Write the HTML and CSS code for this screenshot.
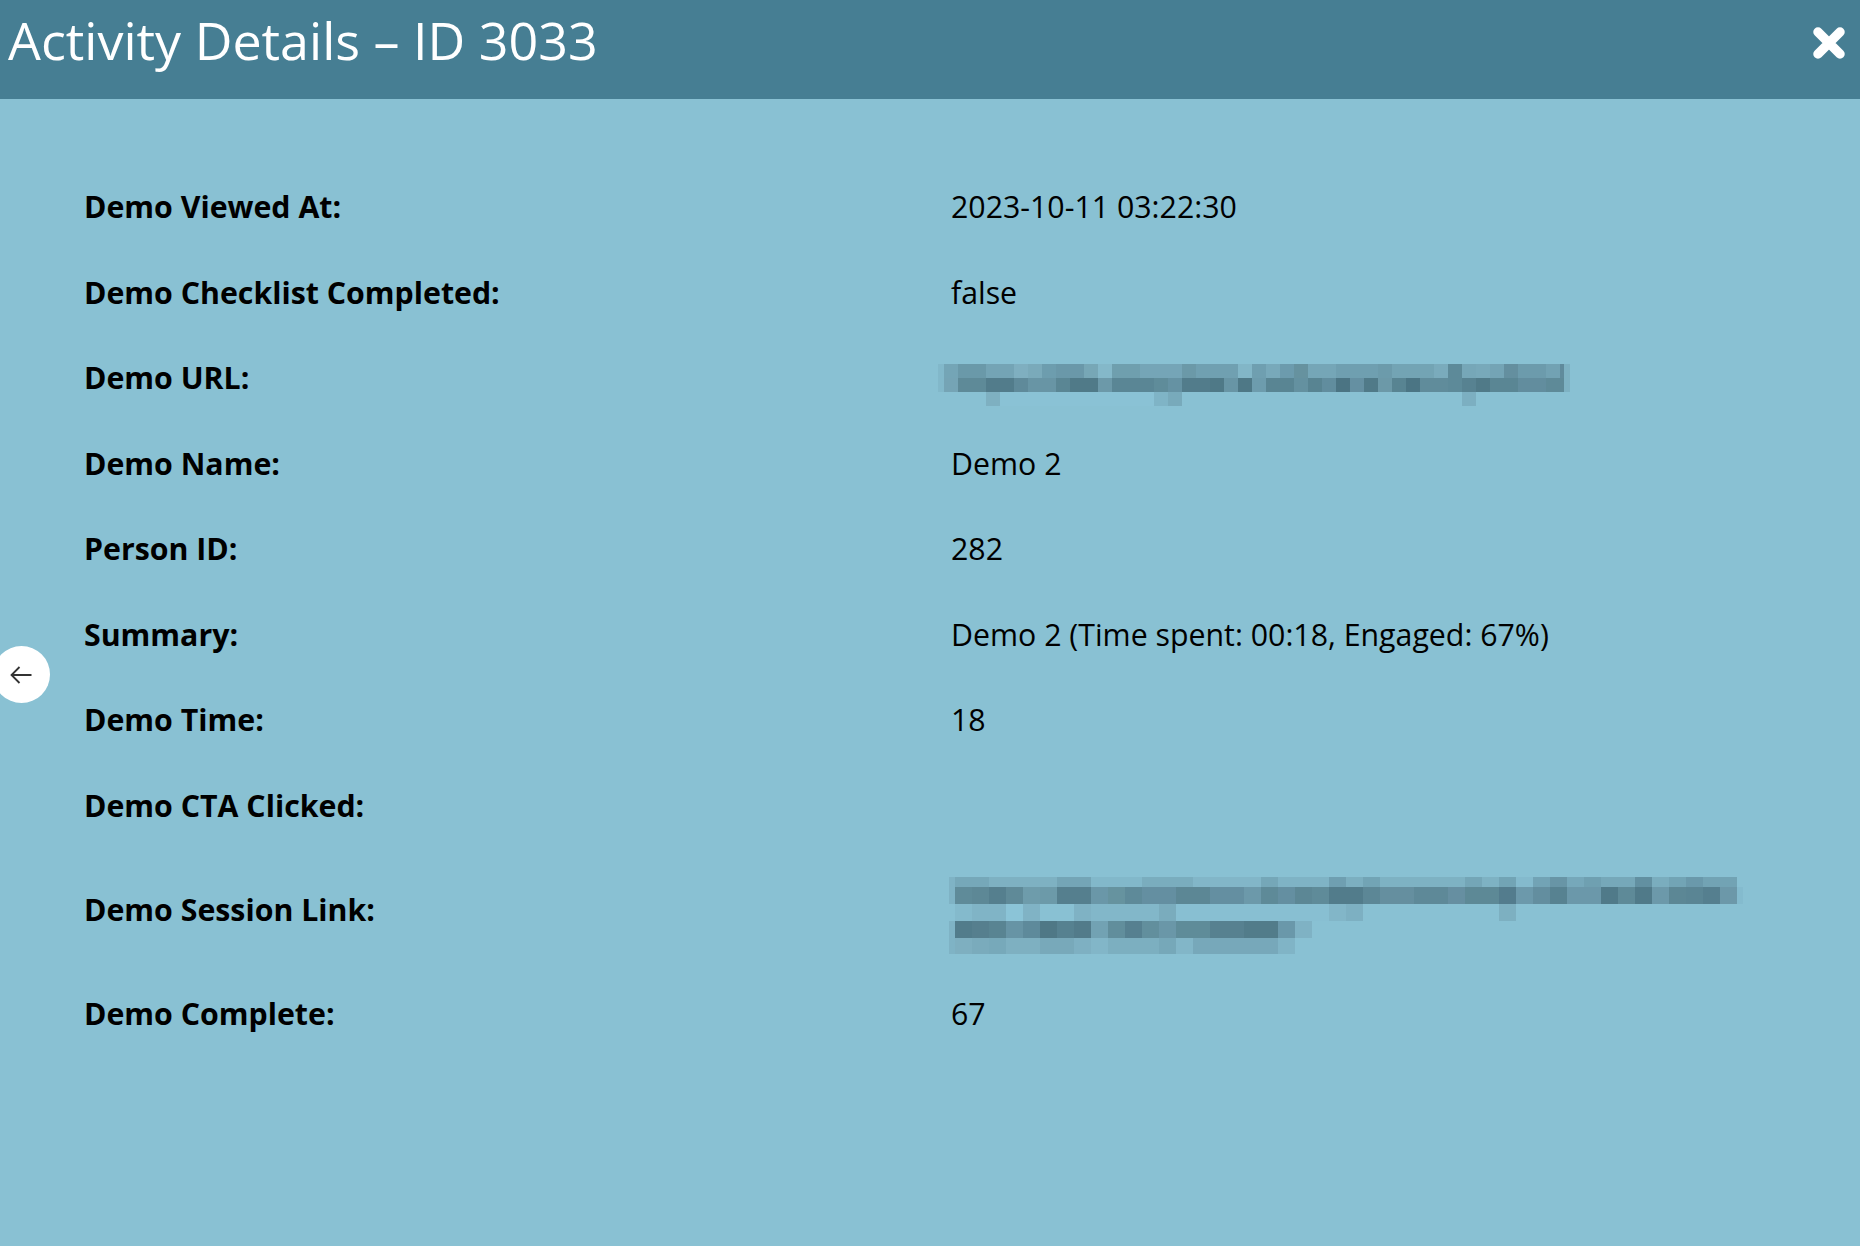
FILE: index.html
```html
<!DOCTYPE html>
<html lang="en">
<head>
<meta charset="UTF-8">
<meta name="viewport" content="width=device-width, initial-scale=1.0">
<title>Activity Details</title>
<link rel="stylesheet" href="styles.css">
</head>
<body>

<div class="modal-header">
    <h1>Activity Details – ID 3033</h1>
    <button class="close-button" aria-label="Close">
        <svg width="32" height="32" viewBox="0 0 32 32"><path d="M5 5L27 27M27 5L5 27" stroke="#fff" stroke-width="9.5" stroke-linecap="round"/></svg>
    </button>
</div>

<div class="details">
    <div class="detail-row"><span class="detail-label">Demo Viewed At:</span><span>2023-10-11 03:22:30</span></div>
    <div class="detail-row"><span class="detail-label">Demo Checklist Completed:</span><span>false</span></div>
    <div class="detail-row">
        <span class="detail-label">Demo URL:</span>
        <div class="blur blur-url"><div class="url-a"></div><div class="url-b"></div><div class="url-c"></div></div>
    </div>
    <div class="detail-row"><span class="detail-label">Demo Name:</span><span>Demo 2</span></div>
    <div class="detail-row"><span class="detail-label">Person ID:</span><span>282</span></div>
    <div class="detail-row"><span class="detail-label">Summary:</span><span>Demo 2 (Time spent: 00:18, Engaged: 67%)</span></div>
    <div class="detail-row"><span class="detail-label">Demo Time:</span><span>18</span></div>
    <div class="detail-row"><span class="detail-label">Demo CTA Clicked:</span><span></span></div>
    <div class="detail-row detail-row-tall">
        <span class="detail-label">Demo Session Link:</span>
        <div class="blur blur-session"><div class="link-a"></div><div class="link-b"></div><div class="link-c"></div><div class="link-d"></div><div class="link-e"></div></div>
    </div>
    <div class="detail-row"><span class="detail-label">Demo Complete:</span><span>67</span></div>
</div>

<button class="back-button" aria-label="Back">
    <svg width="24" height="20" viewBox="0 0 24 20"><path d="M22.5 10H3M10.5 2L2.5 10L10.5 18" fill="none" stroke="#333" stroke-width="1.8"/></svg>
</button>

</body>
</html>
```

FILE: styles.css
```css
body {
    font-family: "Open Sans", sans-serif;
    background-color: #89c1d3;
    color: #000;
    margin: 0;
    height: 1246px;
    overflow: hidden;
    position: relative;
}

.modal-header {
    display: flex;
    justify-content: space-between;
    align-items: center;
    height: 99px;
    padding: 0 15px 14px 8px;
    box-sizing: border-box;
    background-color: #467e93;
}

h1 {
    margin: -6px 0 0;
    font-size: 52px;
    font-weight: 400;
    color: #fff;
}

.close-button {
    display: flex;
    padding: 0;
    background: none;
    border: none;
    cursor: pointer;
}

.details {
    padding: 65px 0 0 84px;
    font-size: 30.3px;
}

.detail-row {
    display: grid;
    grid-template-columns: 867px 1fr;
    align-items: center;
    height: 85.5px;
}

.detail-row-tall {
    height: 123px;
}

.detail-label {
    font-weight: 700;
}

.back-button {
    position: absolute;
    left: -7px;
    top: 646px;
    width: 57px;
    height: 57px;
    display: flex;
    align-items: center;
    justify-content: center;
    padding: 0 2px 0 0;
    background-color: #fff;
    border: none;
    border-radius: 50%;
    cursor: pointer;
}

/* pixelated areas where the source image hides a link */
.blur div {
    border-style: solid;
    border-color: transparent;
    border-width: 0 6px;
}

.blur-url {
    margin: 14px 0 0 -13px;
    width: 632px;
}

.blur-url div {
    height: 14px;
}

.blur .url-a, .blur .url-b {
    border-left-color: #82b8ca;
    border-right-color: #7eb2c3;
}

.url-a {
    background: linear-gradient(90deg, #74a5b6 0 14px, #6a99a9 0 42px, #74a4b5 0 70px, #7fafc0 0 84px, #7aaaba 0 98px, #6d9dae 0 112px, #6a98a9 0 140px, #77a7b6 0 154px, #84b8c9 0 168px, #6f9fae 0 196px, #75a5b7 0 238px, #6b99a8 0 252px, #70a0b1 0 294px, #82b6c7 0 308px, #6f9fb0 0 322px, #78a9ba 0 336px, #6c9bad 0 350px, #66929f 0 364px, #75a6b7 0 392px, #6f9fb0 0 434px, #6c9bab 0 448px, #73a4b4 0 490px, #7aabbc 0 504px, #5d8a99 0 518px, #76a7b8 0 532px, #78a9ba 0 546px, #74a4b5 0 560px, #648f9f 0 574px, #6c9bac 0 602px, #72a2b3 0 616px, #608b9c 0 620px);
}

.url-b {
    background: linear-gradient(90deg, #75a4b5 0 14px, #5e8a98 0 42px, #527c8b 0 70px, #5f8a9a 0 84px, #6895a5 0 112px, #5a8694 0 126px, #507a88 0 154px, #6c99a9 0 168px, #5a8695 0 210px, #5f8c9a 0 224px, #6592a3 0 238px, #527c8b 0 266px, #4f7987 0 280px, #6895a5 0 294px, #4e7886 0 308px, #6d9cad 0 322px, #598593 0 350px, #6491a0 0 364px, #588492 0 378px, #618d9e 0 392px, #4b7483 0 406px, #6590a2 0 420px, #507a88 0 434px, #6c99a8 0 448px, #588492 0 462px, #4b7584 0 476px, #608c9b 0 504px, #5d8a99 0 518px, #578291 0 532px, #507a88 0 546px, #5a8694 0 574px, #628d9e 0 602px, #5e8a98 0 620px);
}

.url-c {
    background: linear-gradient(90deg, #89c1d3 0 42px, #7eb0c1 0 56px, #8ac2d5 0 210px, #7fb4c6 0 224px, #78aabb 0 238px, #89c1d3 0 518px, #7cafc1 0 532px, #89c1d3 0 620px);
}

.blur-session {
    margin: 12px 0 0 -2px;
    width: 794px;
}

.blur-session div {
    height: 17px;
}

.blur-session .link-a {
    height: 10px;
}

.blur-session .link-e {
    height: 16px;
}

.blur .link-a, .blur .link-b, .blur .link-d, .blur .link-e {
    border-left-color: #7fb3c5;
}

.blur .link-b {
    border-right-color: #84bbce;
}

.link-a {
    background: linear-gradient(90deg, #76a8b9 0 34px, #7eb1c2 0 102px, #74a5b6 0 136px, #82b8ca 0 187px, #7aadbe 0 238px, #82b6c8 0 306px, #75a7b8 0 323px, #7fb3c5 0 374px, #6f9fb1 0 391px, #7cafc0 0 408px, #72a4b5 0 425px, #7eb2c3 0 510px, #74a6b7 0 527px, #7eb2c3 0 544px, #72a4b5 0 561px, #84bacd 0 578px, #72a3b5 0 595px, #6895a6 0 612px, #76a8ba 0 629px, #6fa0b1 0 646px, #76a8b9 0 680px, #6290a1 0 697px, #7aadbe 0 714px, #72a4b5 0 731px, #6a99ab 0 748px, #72a3b4 0 782px);
}

.link-b {
    background: linear-gradient(90deg, #5f8b99 0 17px, #5d8896 0 34px, #557f8e 0 51px, #5f8a98 0 68px, #6e9cab 0 85px, #6c9aa9 0 102px, #557f8e 0 136px, #6a97a8 0 153px, #66939f 0 170px, #5e8a99 0 187px, #648fa1 0 221px, #5c8795 0 255px, #648fa1 0 289px, #6c99aa 0 306px, #5e8a98 0 323px, #648fa1 0 340px, #5c8795 0 357px, #5f8b99 0 374px, #527c8b 0 408px, #5c8796 0 425px, #658f9f 0 459px, #5e8998 0 493px, #668fa1 0 510px, #5d8996 0 544px, #537c8d 0 561px, #6c99ab 0 578px, #638e9f 0 595px, #578291 0 612px, #6b98aa 0 646px, #507a89 0 663px, #5e8a98 0 680px, #507a89 0 697px, #6c99aa 0 714px, #5c8795 0 731px, #5a8594 0 748px, #557f8f 0 765px, #6c98a9 0 782px);
}

.link-c {
    background: linear-gradient(90deg, #84bacc 0 17px, #80b4c6 0 51px, #8bc4d7 0 68px, #80b3c5 0 85px, #89c1d3 0 119px, #7fb2c4 0 136px, #82b7c9 0 204px, #7aacbd 0 221px, #88bfd2 0 374px, #82b6c8 0 391px, #7db0c2 0 408px, #89c1d3 0 544px, #7db0c1 0 561px, #89c1d3 0 782px);
}

.link-d {
    background: linear-gradient(90deg, #527c8b 0 17px, #567f8e 0 34px, #598492 0 51px, #6794a5 0 68px, #5e8a9b 0 85px, #4f7886 0 102px, #568190 0 119px, #527b8a 0 136px, #72a2b3 0 153px, #618e9c 0 170px, #568090 0 187px, #628f9d 0 204px, #6a97a8 0 221px, #5f8c99 0 255px, #578190 0 289px, #527c8a 0 323px, #6a98aa 0 340px, #7fb2c4 0 357px, #89c1d3 0 782px);
}

.link-e {
    background: linear-gradient(90deg, #7eafc0 0 17px, #7aabbc 0 34px, #77a9ba 0 51px, #7eb0c1 0 85px, #78a9ba 0 119px, #7eb0c2 0 136px, #82b6c8 0 153px, #7cafc0 0 204px, #76a8b9 0 221px, #82b6c8 0 238px, #77a8ba 0 323px, #80b4c6 0 340px, #89c1d3 0 782px);
}

.blur div {
    background-clip: padding-box;
}
```
